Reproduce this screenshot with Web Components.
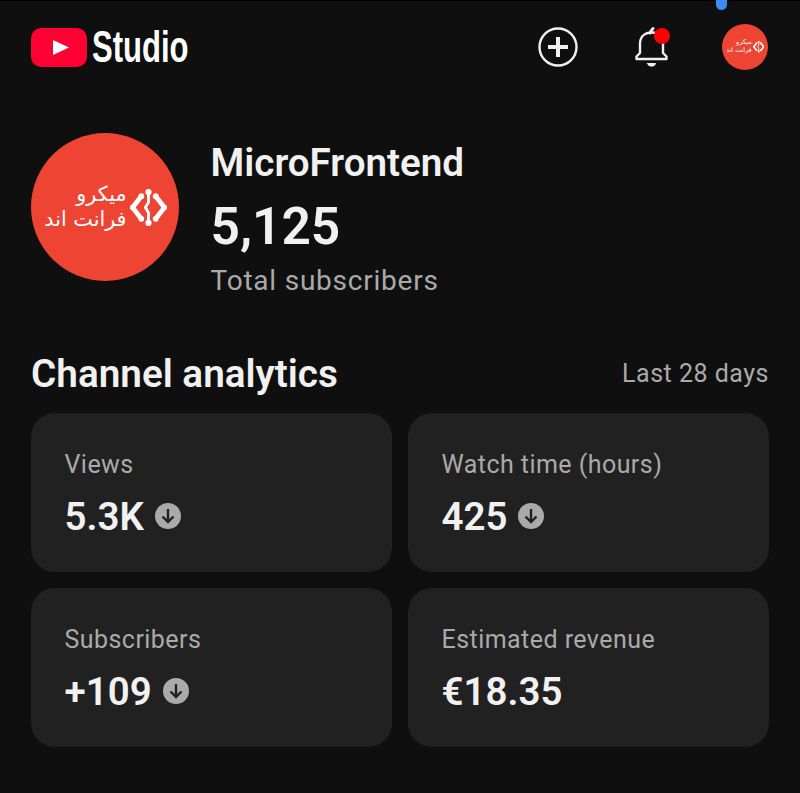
<!DOCTYPE html>
<html>
<head>
<meta charset="utf-8">
<style>
    html, body { margin: 0; background: #0f0f0f; }
    body { width: 800px; height: 793px; overflow: hidden; font-family: Roboto, sans-serif; color: #f1f1f1; }
</style>
</head>
<body>
<studio-app>
    <studio-header slot="header"></studio-header>
    <channel-summary slot="summary" name="MicroFrontend" count="5,125" caption="Total subscribers"></channel-summary>
    <analytics-section slot="analytics" title="Channel analytics" period="Last 28 days">
        <stat-card label="Views" value="5.3K" trend></stat-card>
        <stat-card label="Watch time (hours)" value="425" trend></stat-card>
        <stat-card label="Subscribers" value="+109" trend></stat-card>
        <stat-card label="Estimated revenue" value="€18.35"></stat-card>
    </analytics-section>
</studio-app>
<script>
class StudioApp extends HTMLElement {
    connectedCallback() {
        this.attachShadow({ mode: 'open' });
        this.shadowRoot.innerHTML = `
            <style>
                :host { display: block; position: relative; height: 793px; padding: 0 31px; box-sizing: border-box; }
                .indicator {
                    position: absolute; left: 716px; top: -6px; width: 11px; height: 16px;
                    background: #3b8cf5; border-radius: 6px;
                }
                .top-line { position: absolute; left: 0; right: 0; top: 0; height: 1px; background: #000; }
            </style>
            <div class="top-line"></div>
            <div class="indicator"></div>
            <slot name="header"></slot>
            <slot name="summary"></slot>
            <slot name="analytics"></slot>
        `;
    }
}

class BrandAvatar extends HTMLElement {
    connectedCallback() {
        const size = parseInt(this.getAttribute('size'));
        this.attachShadow({ mode: 'open' });
        this.shadowRoot.innerHTML = `
            <style>
                :host { display: block; flex: none; }
                .circle {
                    width: ${size}px; height: ${size}px; border-radius: 50%; background: #ee4434;
                    display: flex; align-items: center; justify-content: flex-end; gap: ${size * 0.025}px;
                    padding-right: ${size * 0.08}px; box-sizing: border-box; color: #fff; overflow: hidden;
                }
                .words {
                    font: ${size * 0.14}px/${size * 0.172}px "DejaVu Sans", sans-serif;
                    text-align: right; direction: rtl; white-space: nowrap;
                }
                svg { width: ${size * 0.25}px; height: ${size * 0.25}px; display: block; flex: none; }
            </style>
            <div class="circle">
                <div class="words">میکرو<br>فرانت اند</div>
                <svg viewBox="0 0 36 36" fill="none" stroke="#fff" stroke-width="4.600" stroke-linecap="round" stroke-linejoin="round">
                    <path d="M11 7 2.500 18 11 29"/>
                    <path d="M25 7 33.500 18 25 29"/>
                    <path d="M18 2V13L15 18 18 23V34" stroke-width="2.800"/>
                    <g fill="#fff" stroke="none">
                        <circle cx="18" cy="3" r="3"/>
                        <circle cx="18" cy="33" r="3"/>
                        <circle cx="2.800" cy="18" r="2.800"/>
                        <circle cx="33.200" cy="18" r="2.800"/>
                        <circle cx="11" cy="7" r="2.800"/>
                        <circle cx="25" cy="7" r="2.800"/>
                        <circle cx="11" cy="29" r="2.800"/>
                        <circle cx="25" cy="29" r="2.800"/>
                    </g>
                </svg>
            </div>
        `;
    }
}

class StudioHeader extends HTMLElement {
    connectedCallback() {
        this.attachShadow({ mode: 'open' });
        this.shadowRoot.innerHTML = `
            <style>
                :host { display: flex; align-items: center; justify-content: space-between; height: 94px; }
                .logo { display: flex; align-items: center; gap: 5px; }
                .logo svg { width: 56px; height: 39px; display: block; }
                .wordmark {
                    font: 700 44px/46px "Liberation Sans", sans-serif; color: #fff; width: 96px;
                    display: inline-block; transform: scaleX(.705); transform-origin: 0 50%; white-space: nowrap;
                }
                .actions { display: flex; align-items: center; margin-right: 1px; }
                .actions svg { display: block; }
                .plus { width: 42px; height: 42px; margin-right: 52px; }
                .bell { position: relative; width: 40px; height: 46px; margin-right: 51px; }
                .bell i { position: absolute; right: 1px; top: 4px; width: 16px; height: 16px; border-radius: 50%; background: #f00; }
            </style>
            <div class="logo">
                <svg viewBox="0 0 56 39">
                    <rect width="56" height="39" rx="10" fill="#ff0033"/>
                    <path d="M22 12 38 19.500 22 27Z" fill="#fff"/>
                </svg>
                <span class="wordmark">Studio</span>
            </div>
            <div class="actions">
                <svg class="plus" viewBox="0 0 42 42" fill="none" stroke="#f1f1f1">
                    <circle cx="21" cy="21" r="18.500" stroke-width="2.400"/>
                    <path d="M21 11V31M11 21H31" stroke-width="4"/>
                </svg>
                <div class="bell">
                    <svg width="40" height="46" viewBox="0 0 40 46" fill="none" stroke="#f1f1f1" stroke-width="2.400" stroke-linejoin="round" stroke-linecap="round">
                        <path d="M5.500 35H35.500V32.500L32 29V20C32 12 27 8.500 21 8.500 13.500 8.500 9 13 9 20V29L5.500 32.500Z"/>
                        <path d="M19 9C20 7 21 5.500 22 4.500" stroke-width="3"/>
                        <path d="M16.500 39.500H24.500C24 43 17 43 16.500 39.500Z" fill="#f1f1f1" stroke-width="1"/>
                    </svg>
                    <i></i>
                </div>
                <brand-avatar size="46"></brand-avatar>
            </div>
        `;
    }
}

class ChannelSummary extends HTMLElement {
    connectedCallback() {
        this.attachShadow({ mode: 'open' });
        this.shadowRoot.innerHTML = `
            <style>
                :host { display: flex; gap: 31.500px; margin-top: 39px; height: 148px; }
                .name { font: 600 38.600px/46px Roboto, sans-serif; margin-top: 7px; }
                .count { font: 600 51.500px/56px Roboto, sans-serif; margin-top: 13px; }
                .caption { font: 400 28px/36px Roboto, sans-serif; color: #aaa; margin-top: 8px; letter-spacing: .78px; }
            </style>
            <brand-avatar size="148"></brand-avatar>
            <div>
                <div class="name">${this.getAttribute('name')}</div>
                <div class="count">${this.getAttribute('count')}</div>
                <div class="caption">${this.getAttribute('caption')}</div>
            </div>
        `;
    }
}

class AnalyticsSection extends HTMLElement {
    connectedCallback() {
        this.attachShadow({ mode: 'open' });
        this.shadowRoot.innerHTML = `
            <style>
                :host { display: block; margin-top: 69px; }
                .head { display: flex; align-items: center; justify-content: space-between; height: 48px; }
                h2 { margin: 0; font: 600 38.700px/50px Roboto, sans-serif; }
                .period { font: 400 25px/34px Roboto, sans-serif; color: #aaa; letter-spacing: .5px; }
                .grid { display: grid; grid-template-columns: 361px 361px; gap: 16px; margin-top: 15px; }
            </style>
            <div class="head">
                <h2>${this.getAttribute('title')}</h2>
                <span class="period">${this.getAttribute('period')}</span>
            </div>
            <div class="grid"><slot></slot></div>
        `;
    }
}

class StatCard extends HTMLElement {
    connectedCallback() {
        const trend = this.hasAttribute('trend') ? `
            <svg viewBox="0 0 26 26" fill="none">
                <circle cx="13" cy="13" r="13" fill="#aaa"/>
                <path d="M13 6V19M7.500 13.500 13 19 18.500 13.500" stroke="#212121" stroke-width="2.400"/>
            </svg>` : '';
        this.attachShadow({ mode: 'open' });
        this.shadowRoot.innerHTML = `
            <style>
                :host {
                    display: block; height: 159px; box-sizing: border-box; padding: 35px 33.500px 0;
                    background: #212121; border-radius: 24px;
                }
                .label { font: 400 25px/34px Roboto, sans-serif; color: #aaa; letter-spacing: .45px; }
                .value { display: flex; align-items: center; gap: 11px; margin-top: 14px; font: 600 38.500px/42px Roboto, sans-serif; }
                svg { width: 26px; height: 26px; display: block; margin-top: -2px; }
            </style>
            <div class="label">${this.getAttribute('label')}</div>
            <div class="value"><span>${this.getAttribute('value')}</span>${trend}</div>
        `;
    }
}

customElements.define('brand-avatar', BrandAvatar);
customElements.define('studio-app', StudioApp);
customElements.define('studio-header', StudioHeader);
customElements.define('channel-summary', ChannelSummary);
customElements.define('analytics-section', AnalyticsSection);
customElements.define('stat-card', StatCard);
</script>
</body>
</html>
